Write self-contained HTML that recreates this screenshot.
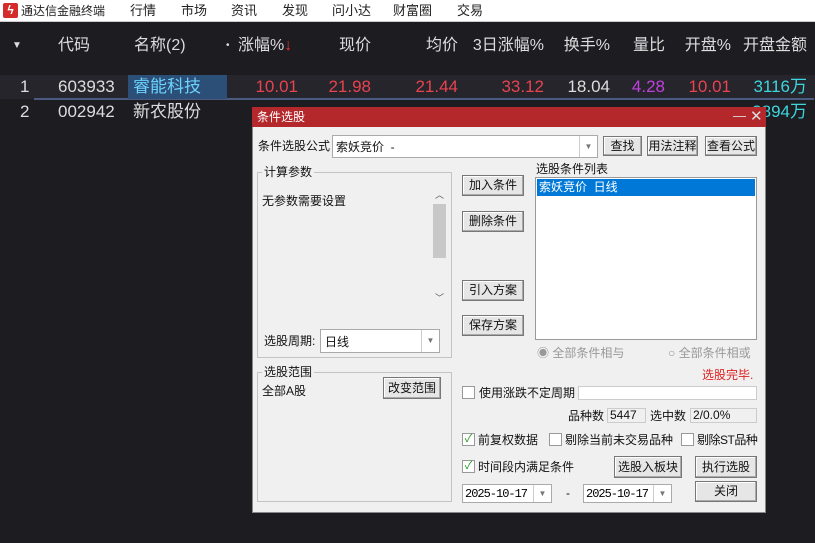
<!DOCTYPE html><html><head><meta charset="utf-8"><style>
*{margin:0;padding:0;box-sizing:border-box}
body{width:815px;height:543px;overflow:hidden;background:#1c1c21;font-family:"Liberation Sans","Noto Sans CJK SC",sans-serif;position:relative}
.a{position:absolute;white-space:nowrap}
.m{font-size:13px;color:#222;top:2px;line-height:18px}
.h{font-size:16px;color:#ddd;top:35px;line-height:22px}
.r{font-size:17px;top:75px;line-height:24px;height:24px}
.r2{top:100px}
.rt{text-align:right}
.d{font-size:12px;color:#111;line-height:14px}
.btn{position:absolute;background:#e6e6e6;border:1px solid #777;box-shadow:inset -1px -1px #aaa,inset 1px 1px #fff;font-size:12px;color:#111;text-align:center}
.box{position:absolute;background:#fff;border:1px solid #aaa}
.grp{position:absolute;border:1px solid #c4c4c4}
.cb{position:absolute;width:13px;height:13px;border:1px solid #999;background:#fff;font-size:11px;color:#1a9a1a;line-height:11px;text-align:center}
.arr{position:absolute;right:0;top:0;bottom:0;width:18px;border-left:1px solid #ccc;color:#777;font-size:8px;text-align:center}
</style></head><body>
<div class="a" style="left:0;top:0;width:815px;height:22px;background:#fff;border-bottom:1px solid #ccc"></div>
<div class="a" style="left:3px;top:3px;width:15px;height:15px;background:#d42b2b;border-radius:2px;color:#fff;font-size:12px;line-height:15px;text-align:center;font-weight:bold">ϟ</div>
<div class="a m" style="left:21px;font-size:12px">通达信金融终端</div>
<div class="a m" style="left:130px">行情</div><div class="a m" style="left:181px">市场</div><div class="a m" style="left:231px">资讯</div><div class="a m" style="left:282px">发现</div><div class="a m" style="left:332px">问小达</div><div class="a m" style="left:393px">财富圈</div><div class="a m" style="left:457px">交易</div>
<div class="a" style="left:0;top:75px;width:815px;height:24px;background:#25252b"></div>
<div class="a" style="left:34px;top:98px;width:780px;height:2px;background:#4a5a80"></div>
<div class="a h" style="left:12px;font-size:10px">▼</div>
<div class="a h" style="left:58px">代码</div><div class="a h" style="left:134px">名称(2)</div><div class="a h" style="left:226px;font-size:10px">•</div>
<div class="a h" style="left:238px">涨幅%<span style="color:#e33">↓</span></div>
<div class="a h rt" style="right:444px">现价</div><div class="a h rt" style="right:357px">均价</div><div class="a h rt" style="right:271px">3日涨幅%</div><div class="a h rt" style="right:205px">换手%</div><div class="a h rt" style="right:150px">量比</div><div class="a h rt" style="right:84px">开盘%</div><div class="a h rt" style="right:8px">开盘金额</div>
<div class="a" style="left:128px;top:75px;width:99px;height:24px;background:#2c4f78"></div>
<div class="a r" style="left:20px;color:#ddd">1</div><div class="a r" style="left:58px;color:#ddd">603933</div><div class="a r" style="left:133px;color:#6cd3ff">睿能科技</div>
<div class="a r rt" style="right:517px;color:#e8434f">10.01</div><div class="a r rt" style="right:444px;color:#e8434f">21.98</div><div class="a r rt" style="right:357px;color:#e8434f">21.44</div><div class="a r rt" style="right:271px;color:#e8434f">33.12</div><div class="a r rt" style="right:205px;color:#ddd">18.04</div><div class="a r rt" style="right:150px;color:#c040e0">4.28</div><div class="a r rt" style="right:84px;color:#e8434f">10.01</div><div class="a r rt" style="right:8px;color:#3dd6dc">3116万</div>
<div class="a r r2" style="left:20px;color:#ddd">2</div><div class="a r r2" style="left:58px;color:#ddd">002942</div><div class="a r r2" style="left:133px;color:#ddd">新农股份</div><div class="a r r2 rt" style="right:8px;color:#3dd6dc">3894万</div>
<!-- dialog -->
<div class="a" style="left:252px;top:107px;width:514px;height:406px;background:#f0f0f0;border:1px solid #888"></div>
<div class="a" style="left:252px;top:107px;width:514px;height:20px;background:#b4282c"></div>
<div class="a" style="left:257px;top:109px;color:#fff;font-size:12px;line-height:16px">条件选股</div>
<div class="a" style="left:733px;top:108px;color:#ddd;font-size:13px">—</div><div class="a" style="left:750px;top:107px;color:#ddd;font-size:15px">✕</div>
<div class="a d" style="left:258px;top:139px">条件选股公式</div>
<div class="box" style="left:332px;top:135px;width:266px;height:23px"><span class="a d" style="left:3px;top:4px">索妖竞价&nbsp; -</span><div class="arr" style="line-height:21px">▼</div></div>
<div class="btn" style="left:603px;top:136px;width:39px;height:20px;line-height:18px">查找</div>
<div class="btn" style="left:647px;top:136px;width:51px;height:20px;line-height:18px">用法注释</div>
<div class="btn" style="left:705px;top:136px;width:52px;height:20px;line-height:18px">查看公式</div>
<div class="grp" style="left:257px;top:172px;width:195px;height:186px"></div>
<div class="a d" style="left:262px;top:165px;background:#f0f0f0;padding:0 2px">计算参数</div>
<div class="a d" style="left:262px;top:194px">无参数需要设置</div>
<div class="a" style="left:432px;top:188px;width:15px;height:116px;background:#f0f0f0;color:#555;font-size:9px;text-align:center">︿<div style="position:absolute;left:1px;top:16px;width:13px;height:54px;background:#c8c8c8"></div><div style="position:absolute;bottom:0;width:15px">﹀</div></div>
<div class="a d" style="left:264px;top:334px">选股周期:</div>
<div class="box" style="left:320px;top:329px;width:120px;height:24px"><span class="a d" style="left:4px;top:5px">日线</span><div class="arr" style="line-height:22px">▼</div></div>
<div class="btn" style="left:462px;top:175px;width:62px;height:21px;line-height:19px">加入条件</div>
<div class="btn" style="left:462px;top:211px;width:62px;height:21px;line-height:19px">删除条件</div>
<div class="btn" style="left:462px;top:280px;width:62px;height:21px;line-height:19px">引入方案</div>
<div class="btn" style="left:462px;top:315px;width:62px;height:21px;line-height:19px">保存方案</div>
<div class="a d" style="left:536px;top:162px">选股条件列表</div>
<div class="box" style="left:535px;top:177px;width:222px;height:163px;border-color:#999"></div>
<div class="a" style="left:537px;top:179px;width:218px;height:17px;background:#0078d7;color:#fff;font-size:12px;line-height:15px;padding:1px 2px">索妖竞价&nbsp; 日线</div>
<div class="a" style="left:537px;top:346px;font-size:12px;color:#999;line-height:14px">◉ 全部条件相与</div>
<div class="a" style="left:668px;top:346px;font-size:12px;color:#999;line-height:14px">○ 全部条件相或</div>
<div class="grp" style="left:257px;top:372px;width:195px;height:130px"></div>
<div class="a d" style="left:262px;top:365px;background:#f0f0f0;padding:0 2px">选股范围</div>
<div class="a d" style="left:262px;top:384px">全部A股</div>
<div class="btn" style="left:383px;top:377px;width:58px;height:22px;line-height:20px">改变范围</div>
<div class="a" style="left:702px;top:368px;font-size:12px;color:#e02020;line-height:14px">选股完毕.</div>
<div class="cb" style="left:462px;top:386px"></div><div class="a d" style="left:479px;top:386px">使用涨跌不定周期</div>
<div class="box" style="left:578px;top:386px;width:179px;height:14px;border-color:#ccc"></div>
<div class="a d" style="left:568px;top:409px">品种数</div>
<div class="a d" style="left:607px;top:408px;width:39px;height:15px;border:1px solid #ccc;padding-left:2px;line-height:13px">5447</div>
<div class="a d" style="left:650px;top:409px">选中数</div>
<div class="a d" style="left:690px;top:408px;width:67px;height:15px;border:1px solid #ccc;padding-left:2px;line-height:13px">2/0.0%</div>
<div class="cb" style="left:462px;top:433px">✓</div><div class="a d" style="left:478px;top:433px">前复权数据</div>
<div class="cb" style="left:549px;top:433px"></div><div class="a d" style="left:565px;top:433px">剔除当前未交易品种</div>
<div class="cb" style="left:681px;top:433px"></div><div class="a d" style="left:697px;top:433px;letter-spacing:-0.5px">剔除ST品种</div>
<div class="cb" style="left:462px;top:460px">✓</div><div class="a d" style="left:478px;top:460px">时间段内满足条件</div>
<div class="btn" style="left:614px;top:456px;width:68px;height:22px;line-height:20px">选股入板块</div>
<div class="btn" style="left:695px;top:456px;width:62px;height:22px;line-height:20px">执行选股</div>
<div class="box" style="left:462px;top:484px;width:90px;height:19px"><span class="a" style="left:2px;top:2px;font-size:12px;line-height:14px;font-family:'Liberation Mono',monospace;letter-spacing:-1px">2025-10-17</span><div class="arr" style="line-height:17px">▼</div></div>
<div class="a d" style="left:566px;top:486px">-</div>
<div class="box" style="left:583px;top:484px;width:89px;height:19px"><span class="a" style="left:2px;top:2px;font-size:12px;line-height:14px;font-family:'Liberation Mono',monospace;letter-spacing:-1px">2025-10-17</span><div class="arr" style="line-height:17px">▼</div></div>
<div class="btn" style="left:695px;top:481px;width:62px;height:21px;line-height:19px">关闭</div>
</body></html>
